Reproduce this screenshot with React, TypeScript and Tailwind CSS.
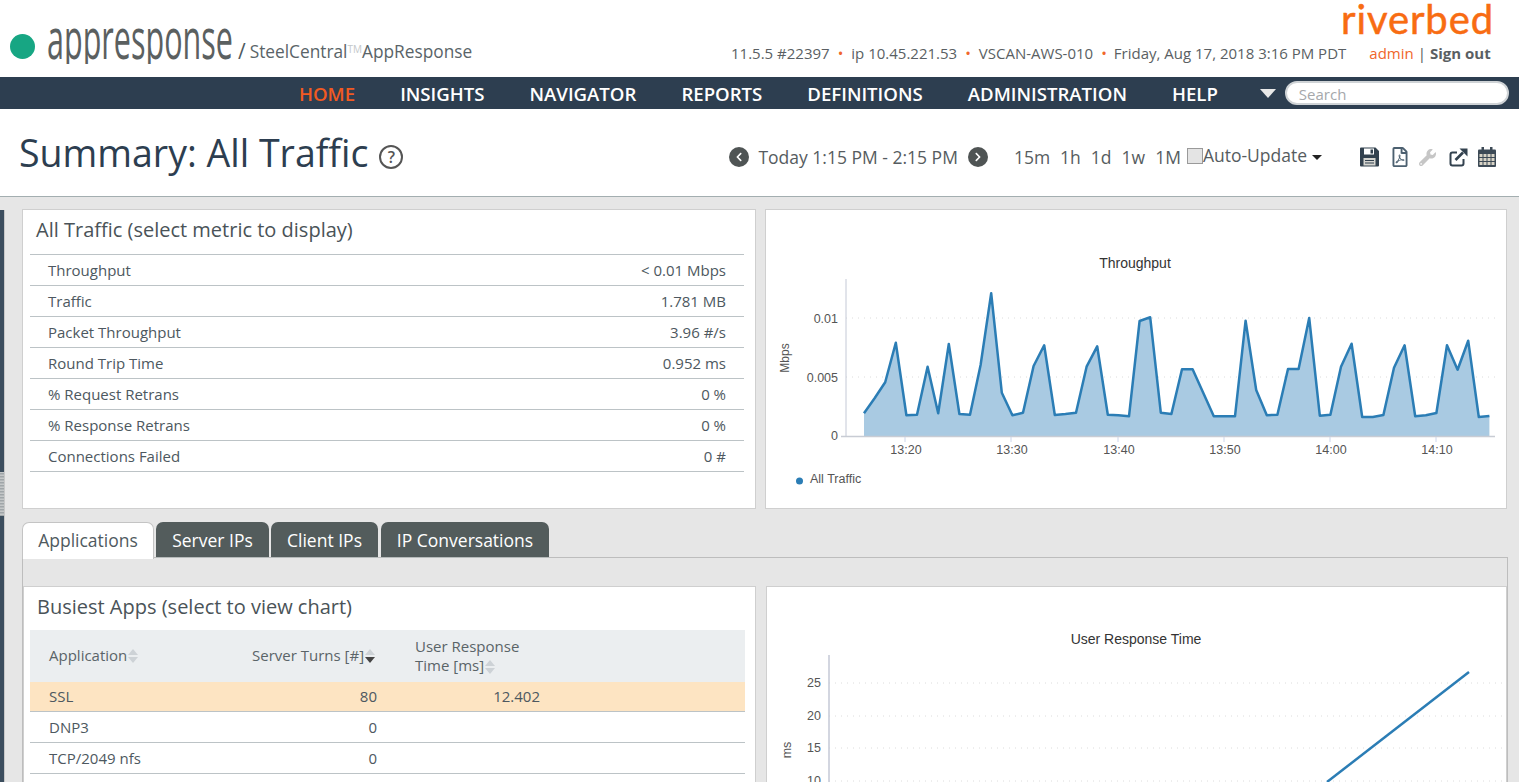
import React from "react";
import { FaRegFilePdf, FaWrench, FaChevronLeft, FaChevronRight } from "react-icons/fa";

const metrics = [
  ["Throughput", "< 0.01 Mbps"],
  ["Traffic", "1.781 MB"],
  ["Packet Throughput", "3.96 #/s"],
  ["Round Trip Time", "0.952 ms"],
  ["% Request Retrans", "0 %"],
  ["% Response Retrans", "0 %"],
  ["Connections Failed", "0 #"],
];

const nav = ["INSIGHTS", "NAVIGATOR", "REPORTS", "DEFINITIONS", "ADMINISTRATION", "HELP"];

// heights read off the reference crop (3x scale); one point per minute
const series = [
  520, 475, 427, 308, 526, 524, 380, 520, 312, 522, 524, 375, 160, 458, 526, 518, 378, 316, 525, 522, 518, 380, 319, 524, 526, 529, 243, 232, 518, 522, 388, 388, 458, 529, 529, 529, 242, 450, 526, 524, 387, 387, 234, 527, 524, 380, 311, 531, 531, 525, 383, 316, 529, 526, 519, 316, 389, 302, 531, 528,
];

function SortIcon({ active }: { active?: boolean }) {
  return (
    <span className="ml-[1px] inline-flex flex-col gap-[2px] align-middle">
      <span className="block h-0 w-0 border-x-[5px] border-b-[6px] border-x-transparent border-b-[#cdd2d6]" />
      <span className={active ? "block h-0 w-0 border-x-[5px] border-t-[6px] border-x-transparent border-t-[#444]" : "block h-0 w-0 border-x-[5px] border-t-[6px] border-x-transparent border-t-[#cdd2d6]"} />
    </span>
  );
}

function ThroughputChart() {
  const pts = series.map((z, i) => [98 + i * 10.6, 30 + z / 3] as const);
  const line = pts.map(([x, y]) => `${x.toFixed(1)},${y.toFixed(1)}`).join(" ");
  const area = `98,226 ${line} ${pts[pts.length - 1][0].toFixed(1)},226`;
  const ticks: [number, string][] = [[139, "13:20"], [245, "13:30"], [352, "13:40"], [458, "13:50"], [564, "14:00"], [670, "14:10"]];
  return (
    <svg width="740" height="297" className="block" fontFamily="'Liberation Sans', Arial, sans-serif" fontSize="12.5">
      <text x="369" y="58" textAnchor="middle" fill="#333" fontSize="14">Throughput</text>
      <line x1="80" y1="108" x2="729" y2="108" stroke="#dcdcdc" strokeDasharray="1 5" />
      <line x1="80" y1="167" x2="729" y2="167" stroke="#dcdcdc" strokeDasharray="1 5" />
      <line x1="80" y1="69" x2="80" y2="227" stroke="#c4c9d6" strokeWidth="1" />
      <polygon points={area} fill="#a9cae2" />
      <polyline points={line} fill="none" stroke="#2b7db5" strokeWidth="2.5" strokeLinejoin="round" />
      <line x1="75" y1="226.5" x2="729" y2="226.5" stroke="#c8ccd4" strokeWidth="1.5" />
      {ticks.map(([x, l]) => (
        <g key={l}>
          <line x1={x} y1="227" x2={x} y2="232" stroke="#ccd6eb" />
          <text x={x + 1} y="244" textAnchor="middle" fill="#555">{l}</text>
        </g>
      ))}
      <text x="72" y="113" textAnchor="end" fill="#555">0.01</text>
      <text x="72" y="172" textAnchor="end" fill="#555">0.005</text>
      <text x="72" y="230" textAnchor="end" fill="#555">0</text>
      <text transform="translate(23 148) rotate(-90)" textAnchor="middle" fill="#555" fontSize="12">Mbps</text>
      <circle cx="33.5" cy="271" r="3.5" fill="#2b7db5" />
      <text x="44" y="273" fill="#555">All Traffic</text>
    </svg>
  );
}

function ResponseChart() {
  return (
    <svg width="740" height="196" className="block" fontFamily="'Liberation Sans', Arial, sans-serif" fontSize="12.5">
      <text x="369" y="57" textAnchor="middle" fill="#333" fontSize="14">User Response Time</text>
      {[96, 129, 161, 194].map((y) => (
        <line key={y} x1="62" y1={y} x2="737" y2={y} stroke="#dcdcdc" strokeDasharray="1 5" />
      ))}
      <line x1="62" y1="68" x2="62" y2="196" stroke="#c4c9d6" strokeWidth="1.5" />
      {[[96, "25"], [129, "20"], [161, "15"], [194, "10"]].map(([y, l]) => (
        <text key={l} x="54" y={Number(y) + 4} textAnchor="end" fill="#555">{l}</text>
      ))}
      <text transform="translate(24 163) rotate(-90)" textAnchor="middle" fill="#555">ms</text>
      <polyline points="702,85 560,195" fill="none" stroke="#2b7db5" strokeWidth="2.5" />
    </svg>
  );
}

function DiskIcon() {
  return (
    <svg width="19" height="20" viewBox="0 0 19 20">
      <path d="M1 0.5H15.5L19 4V18.5a1 1 0 0 1-1 1H1a1 1 0 0 1-1-1V1.5a1 1 0 0 1 1-1Z" fill="#33424f" />
      <rect x="4" y="1.5" width="10" height="6" fill="#ffffff" />
      <rect x="10.5" y="2.5" width="2.5" height="4" fill="#33424f" />
      <rect x="3.5" y="11" width="12" height="7.5" fill="#d5d5d0" />
      <rect x="5" y="13" width="9" height="1" fill="#33424f" />
      <rect x="5" y="15.5" width="9" height="1" fill="#33424f" />
    </svg>
  );
}

function OutIcon() {
  return (
    <svg width="19" height="20" viewBox="0 0 19 20" fill="none">
      <path d="M8 5.5H3.5a2 2 0 0 0-2 2v9a2 2 0 0 0 2 2h9a2 2 0 0 0 2-2V12" stroke="#33424f" strokeWidth="2" />
      <path d="M6.5 13 14 5.5" stroke="#33424f" strokeWidth="2.6" />
      <path d="M10.5 1.5H18.5V9.5Z" fill="#33424f" />
    </svg>
  );
}

function CalendarIcon() {
  return (
    <svg width="18" height="20" viewBox="0 0 18 20">
      <rect x="0" y="2.5" width="18" height="17.5" rx="1" fill="#3d4a56" />
      <rect x="3.5" y="0" width="2.5" height="4.5" fill="#3d4a56" />
      <rect x="12" y="0" width="2.5" height="4.5" fill="#3d4a56" />
      {[7, 11, 15].map((y) =>
        [1.5, 5.5, 9.5, 13.5].map((x) => <rect key={`${x}-${y}`} x={x} y={y} width="3" height="3" fill="#d8d3c6" />)
      )}
    </svg>
  );
}

export default function App() {
  return (
    <div className="flex h-[782px] w-[1519px] flex-col overflow-hidden bg-[#e6e6e6] font-['Open_Sans',sans-serif] text-[#4d5860]">
      {/* Header */}
      <header className="relative flex h-[77px] shrink-0 items-start bg-white pl-[10px]">
        <span className="mr-[12px] mt-[34px] h-[25px] w-[25px] rounded-full bg-[#17a683]" />
        <div className="h-[64px] w-[186px]">
          <span className="inline-block origin-left scale-x-[0.545] whitespace-nowrap text-[56px] font-medium leading-[74px] text-[#5b6060] [clip-path:inset(0_0_10px_0)]">appresponse</span>
        </div>
        <span className="ml-[5px] mt-[37px] text-[21px] leading-[28px] text-[#4f5a60]">/</span>
        <span className="ml-[4px] mt-[39px] text-[17.3px] leading-[26px] text-[#5a6468]">SteelCentral</span>
        <span className="mt-[42px] text-[10px] leading-[14px] text-[#c4c8ca]">TM</span>
        <span className="mt-[39px] text-[17.3px] leading-[26px] text-[#5a6468]">AppResponse</span>
        <div className="absolute right-[25px] top-0 font-['Lato',sans-serif] text-[40px] leading-[38px] tracking-[0.9px] text-[#f86c12] [-webkit-text-stroke:0.5px_#f86c12]">riverbed</div>
        <div className="absolute left-[731px] top-[43px] flex items-center whitespace-nowrap text-[15px] leading-[20px] text-[#5a5f63]">
          <span>11.5.5 #22397</span>
          <span className="mx-[8px] text-[#f0662b]">•</span>
          <span>ip 10.45.221.53</span>
          <span className="mx-[8px] text-[#f0662b]">•</span>
          <span>VSCAN-AWS-010</span>
          <span className="ml-[8px] mr-[7px] text-[#f0662b]">•</span>
          <span>Friday, Aug 17, 2018 3:16 PM PDT</span>
          <span className="ml-[23px] text-[#f0662b]">admin</span>
          <span className="mx-[4px] text-[#555]">|</span>
          <span className="font-bold">Sign out</span>
        </div>
      </header>

      {/* Nav */}
      <nav className="flex h-[32px] shrink-0 items-center bg-[#2d3e50] pl-[299px]">
        <div className="mt-[1px] flex gap-[45px] text-[18.6px] font-semibold leading-[30px] text-white">
          <span className="text-[#f15a22]">HOME</span>
          {nav.map((n) => (
            <span key={n}>{n}</span>
          ))}
        </div>
        <span className="ml-[42px] h-0 w-0 border-x-[8px] border-t-[9px] border-x-transparent border-t-[#e8e8e8]" />
        <div className="ml-[9px] h-[24px] w-[224px] rounded-full border-2 border-[#cfd3d6] bg-white pl-[12px] text-[15px] leading-[22px] text-[#a5a8ab]">Search</div>
      </nav>

      {/* Title bar */}
      <div className="flex h-[88px] shrink-0 items-center border-b border-[#a3aeb0] bg-white pl-[19px]">
        <h1 className="text-[37.5px] font-normal leading-[48px] text-[#2d3e50]">Summary: All Traffic</h1>
        <span className="ml-[11px] mt-[9px] flex h-[24px] w-[24px] items-center justify-center rounded-full border-[2.5px] border-[#555] text-[16px] font-semibold leading-none text-[#555]">?</span>
        <div className="ml-[326px] mt-[9px] flex items-center">
          <span className="flex h-[20px] w-[20px] items-center justify-center rounded-full bg-[#4f5454] text-[10px] text-white"><FaChevronLeft /></span>
          <span className="ml-[9px] whitespace-nowrap text-[17.5px] text-[#565c60]">Today 1:15 PM - 2:15 PM</span>
          <span className="ml-[10px] flex h-[20px] w-[20px] items-center justify-center rounded-full bg-[#4f5454] text-[10px] text-white"><FaChevronRight /></span>
          <div className="ml-[26px] flex gap-[10px] text-[17.5px] text-[#565c60]">
            <span>15m</span><span>1h</span><span>1d</span><span>1w</span><span>1M</span>
          </div>
          <span className="ml-[6px] mb-[3px] h-[16px] w-[16px] border border-[#9a9a9a] bg-[#e4e4e4]" />
          <span className="mb-[3px] whitespace-nowrap text-[17.5px] text-[#565c60]">Auto-Update</span>
          <span className="ml-[5px] mt-[1px] h-0 w-0 border-x-[5px] border-t-[5px] border-x-transparent border-t-[#222]" />
          <div className="ml-[38px] flex items-center text-[#33424f]">
            <DiskIcon />
            <FaRegFilePdf size={20} className="ml-[11px] text-[#4c6070]" />
            <FaWrench size={17} className="ml-[9px] text-[#c6c6c6]" />
            <span className="ml-[13px]"><OutIcon /></span>
            <span className="ml-[10px]"><CalendarIcon /></span>
          </div>
        </div>
      </div>

      {/* Body */}
      <div className="flex flex-1 overflow-hidden">
        <div className="mt-[13px] flex w-[5px] shrink-0 flex-col border-r border-[#c8c8c8]">
          <div className="h-[262px] bg-[#3c4e5e]" />
          <div className="h-[44px] bg-[repeating-linear-gradient(0deg,#8e9599_0px,#d6d8d8_2px,#8e9599_3px)]" />
          <div className="flex-1 bg-[#3c4e5e]" />
        </div>
        <div className="ml-[17px] flex-1 pt-[12px]">
          {/* Top row */}
          <div className="flex gap-[9px]">
            <section className="h-[300px] w-[734px] border border-[#cfcfcf] bg-white pl-[7px] pr-[11px]">
              <h2 className="ml-[6px] pb-[4px] text-[20px] font-normal leading-[40px] text-[#4a5358]">All Traffic (select metric to display)</h2>
              <div className="border-t border-[#bcc3c6]">
                {metrics.map(([k, v]) => (
                  <div key={k} className="flex h-[31px] items-center justify-between border-b border-[#bcc3c6] px-[18px] text-[15px]">
                    <span>{k}</span>
                    <span>{v}</span>
                  </div>
                ))}
              </div>
            </section>
            <section className="h-[300px] w-[742px] border border-[#cfcfcf] bg-white">
              <ThroughputChart />
            </section>
          </div>

          {/* Tabs */}
          <div className="relative z-10 mt-[13px] flex h-[36px] items-end gap-[2px]">
            <div className="flex h-[37px] w-[132px] items-center justify-center self-start rounded-t-[7px] border border-b-0 border-[#c4c4c4] bg-white pb-[2px] text-[17.5px] text-[#4f5a60]">Applications</div>
            <div className="flex h-[36px] w-[113px] items-center justify-center rounded-t-[7px] border-b border-[#b5baba] bg-[#535c5c] pt-[2px] text-[17.5px] text-white">Server IPs</div>
            <div className="flex h-[36px] w-[107px] items-center justify-center rounded-t-[7px] border-b border-[#b5baba] bg-[#535c5c] pt-[2px] text-[17.5px] text-white">Client IPs</div>
            <div className="ml-[1px] flex h-[36px] w-[168px] items-center justify-center rounded-t-[7px] border-b border-[#b5baba] bg-[#535c5c] pt-[2px] text-[17.5px] text-white">IP Conversations</div>
          </div>

          {/* Tab panel */}
          <div className="-mt-[1px] h-[300px] w-[1486px] border border-[#bdbdbd] pt-[28px]">
            <div className="flex gap-[10px]">
              <section className="h-[300px] w-[733px] border border-[#cfcfcf] bg-white pl-[6px] pr-[10px]">
                <h2 className="ml-[7px] pb-[3px] text-[20px] font-normal leading-[40px] text-[#4a5358]">Busiest Apps (select to view chart)</h2>
                <div className="flex h-[52px] items-center bg-[#ebeef0] text-[15px] leading-[19px] text-[#5a6468]">
                  <div className="w-[203px] pb-[2px] pl-[19px]">Application<SortIcon /></div>
                  <div className="w-[182px] whitespace-nowrap pb-[2px] pl-[19px]">Server Turns [#]<SortIcon active /></div>
                  <div>User Response<br />Time [ms]<SortIcon /></div>
                </div>
                {[["SSL", "80", "12.402"], ["DNP3", "0", ""], ["TCP/2049 nfs", "0", ""]].map(([a, b, c]) => (
                  <div key={a} className={a === "SSL" ? "flex h-[30px] items-center border-b border-[#bcc3c6] bg-[#fde4c2] text-[15px]" : "flex h-[31px] items-center border-b border-[#bcc3c6] text-[15px]"}>
                    <div className="w-[209px] pl-[19px]">{a}</div>
                    <div className="w-[138px] text-right">{b}</div>
                    <div className="w-[163px] text-right">{c}</div>
                  </div>
                ))}
              </section>
              <section className="h-[300px] w-[741px] border border-[#cfcfcf] bg-white">
                <ResponseChart />
              </section>
            </div>
          </div>
        </div>
      </div>
    </div>
  );
}
